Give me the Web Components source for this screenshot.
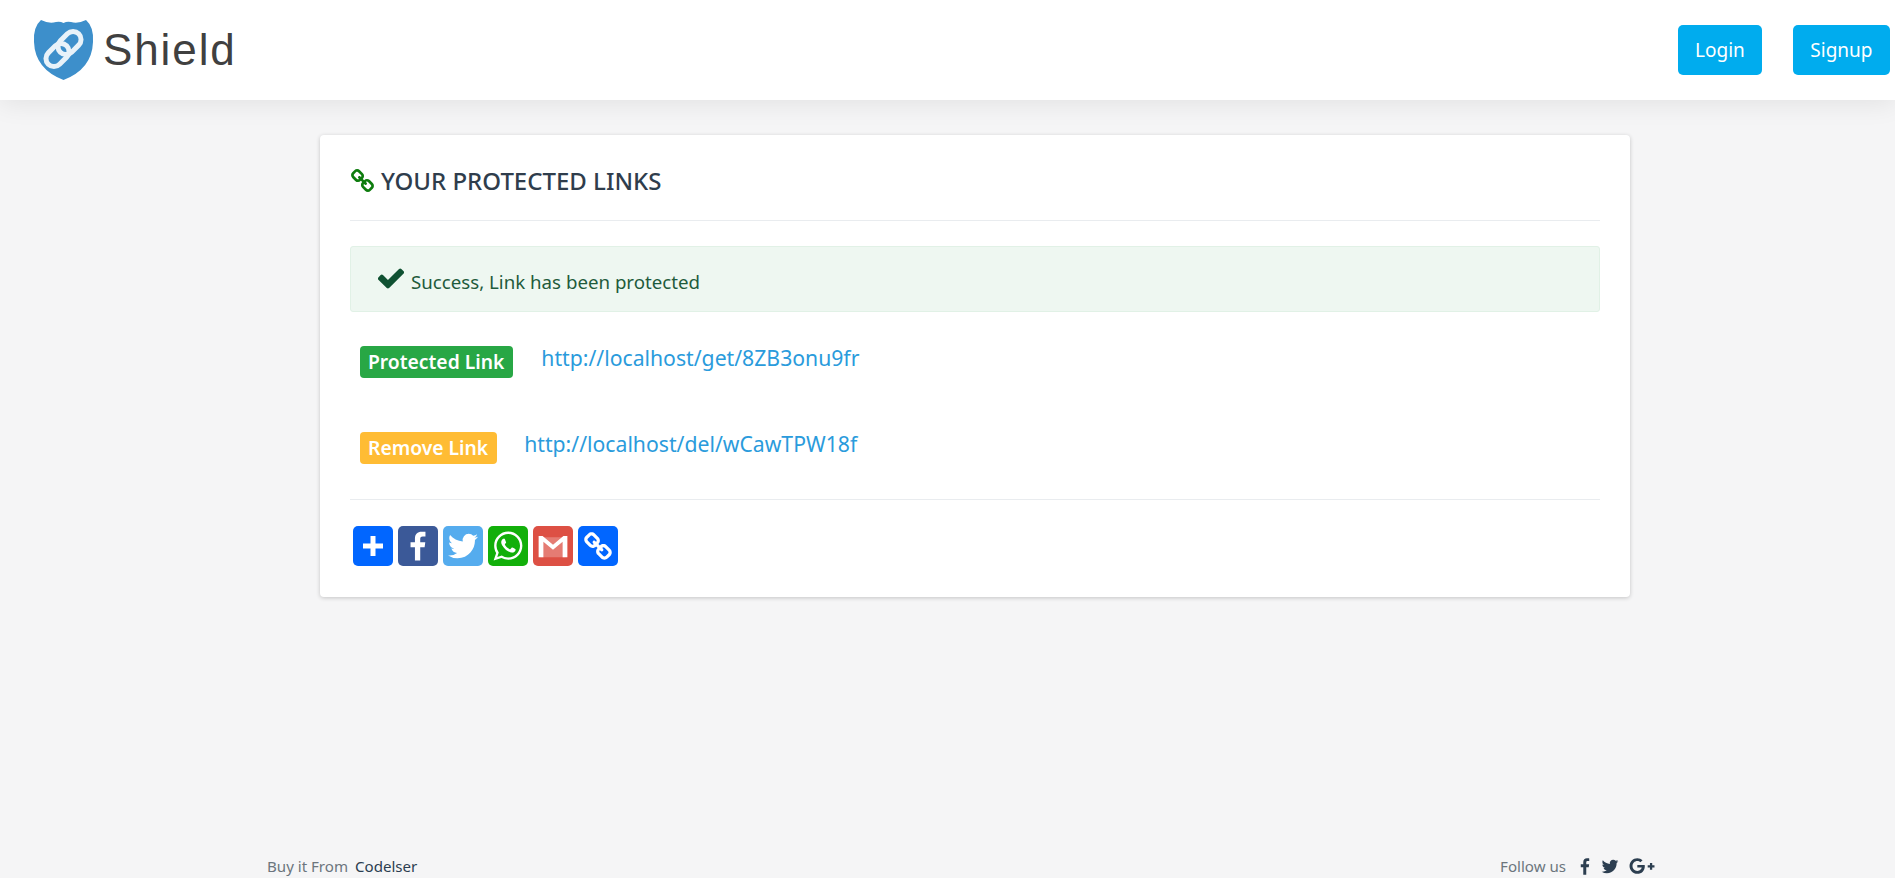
<!DOCTYPE html>
<html lang="en">
<head>
<meta charset="utf-8">
<title>Shield</title>
<style>
  html, body { margin: 0; height: 100%; }
  body {
    background: #f5f5f6;
    font-family: "Noto Sans", "Open Sans", sans-serif;
    color: #2c3e50;
    overflow: hidden;
  }
  #page { display: flex; flex-direction: column; height: 100vh; }
</style>
</head>
<body>
<div id="page">
  <shield-header></shield-header>
  <shield-main>
    <shield-card heading="YOUR PROTECTED LINKS">
      <success-alert>Success, Link has been protected</success-alert>
      <link-row kind="success" label="Protected Link" gap="28" href="http://localhost/get/8ZB3onu9fr"></link-row>
      <link-row kind="warning" label="Remove Link" gap="27" href="http://localhost/del/wCawTPW18f"></link-row>
      <share-bar slot="footer"></share-bar>
    </shield-card>
  </shield-main>
  <shield-footer></shield-footer>
</div>

<script>
/**
 * Icon paths, shared by the elements below.
 */
const LINK_PATH = 'M24.412 21.177c0-.36-.126-.665-.377-.917l-2.804-2.804a1.235 1.235 0 0 0-.913-.378c-.377 0-.7.144-.97.43.026.028.11.11.255.25.144.14.24.236.29.29s.117.14.2.256c.087.117.146.232.177.344.03.112.046.236.046.37 0 .36-.126.666-.377.918a1.25 1.25 0 0 1-.918.377 1.4 1.4 0 0 1-.373-.047 1.062 1.062 0 0 1-.345-.175 2.268 2.268 0 0 1-.256-.2 6.815 6.815 0 0 1-.29-.29c-.14-.142-.223-.23-.25-.254-.297.28-.445.607-.445.984 0 .36.126.664.377.916l2.778 2.79c.243.243.548.364.917.364.36 0 .665-.118.917-.35l1.982-1.97c.252-.25.378-.55.378-.9zm-9.477-9.504c0-.36-.126-.665-.377-.917l-2.777-2.79a1.235 1.235 0 0 0-.913-.378c-.35 0-.656.12-.917.364L7.967 9.92c-.252.252-.378.553-.378.903 0 .36.126.665.377.917l2.804 2.804c.243.243.548.364.917.364.377 0 .7-.14.97-.418-.026-.027-.11-.11-.255-.25s-.24-.235-.29-.29a2.675 2.675 0 0 1-.2-.255 1.052 1.052 0 0 1-.177-.344 1.396 1.396 0 0 1-.046-.37c0-.36.126-.662.377-.914.252-.252.557-.377.917-.377.136 0 .26.015.37.046.114.03.23.09.346.175.117.085.2.153.256.2.054.05.15.148.29.29.14.146.222.23.25.258.294-.278.442-.606.442-.983zM27 21.177c0 1.078-.382 1.99-1.146 2.736l-1.982 1.968c-.745.75-1.658 1.12-2.736 1.12-1.087 0-2.004-.38-2.75-1.143l-2.777-2.79c-.75-.747-1.12-1.66-1.12-2.737 0-1.106.392-2.046 1.183-2.818l-1.186-1.185c-.774.79-1.708 1.186-2.805 1.186-1.078 0-1.995-.376-2.75-1.13l-2.803-2.81C5.377 12.82 5 11.903 5 10.826c0-1.08.382-1.993 1.146-2.738L8.128 6.12C8.873 5.372 9.785 5 10.864 5c1.087 0 2.004.382 2.75 1.146l2.777 2.79c.75.747 1.12 1.66 1.12 2.737 0 1.105-.394 2.045-1.183 2.817l1.186 1.186c.774-.79 1.708-1.186 2.805-1.186 1.078 0 1.995.377 2.75 1.132l2.804 2.804c.754.755 1.13 1.672 1.13 2.75z'
const TWITTER_PATH = 'M28 8.557a9.913 9.913 0 0 1-2.828.775 4.93 4.93 0 0 0 2.166-2.725 9.738 9.738 0 0 1-3.13 1.194 4.92 4.92 0 0 0-3.593-1.55 4.924 4.924 0 0 0-4.794 6.049c-4.09-.21-7.72-2.17-10.15-5.15a4.942 4.942 0 0 0-.665 2.477c0 1.71.87 3.214 2.19 4.1a4.968 4.968 0 0 1-2.23-.616v.06c0 2.39 1.7 4.38 3.952 4.83-.414.115-.85.174-1.297.174-.318 0-.626-.03-.928-.086a4.935 4.935 0 0 0 4.6 3.42 9.893 9.893 0 0 1-6.114 2.107c-.398 0-.79-.023-1.175-.068a13.953 13.953 0 0 0 7.55 2.213c9.056 0 14.01-7.507 14.01-14.013 0-.213-.005-.426-.015-.637.96-.695 1.795-1.56 2.455-2.55z'
const FACEBOOK_PATH = 'M17.78 27.5V17.008h3.522l.527-4.09h-4.05v-2.61c0-1.182.33-1.99 2.023-1.99h2.166V4.66c-.375-.05-1.66-.16-3.155-.16-3.123 0-5.26 1.905-5.26 5.405v3.016h-3.53v4.09h3.53V27.5h4.223z'
const WHATSAPP_PATH = 'M16.21 4.41C9.973 4.41 4.917 9.465 4.917 15.7c0 2.134.592 4.13 1.62 5.832L4.5 27.59l6.25-2.002a11.241 11.241 0 0 0 5.46 1.404c6.234 0 11.29-5.055 11.29-11.29 0-6.237-5.056-11.292-11.29-11.292zm0 20.69c-1.91 0-3.69-.57-5.173-1.553l-3.61 1.156 1.173-3.49a9.345 9.345 0 0 1-1.79-5.512c0-5.18 4.217-9.4 9.4-9.4 5.183 0 9.397 4.22 9.397 9.4 0 5.188-4.214 9.4-9.398 9.4zm5.293-6.832c-.284-.155-1.673-.906-1.934-1.012-.265-.106-.455-.16-.658.12s-.78.91-.954 1.096c-.176.186-.345.203-.628.048-.282-.154-1.2-.494-2.264-1.517-.83-.795-1.373-1.76-1.53-2.055-.158-.295 0-.445.15-.584.134-.124.3-.326.45-.488.15-.163.203-.28.306-.47.104-.19.06-.36-.005-.506-.066-.147-.59-1.587-.81-2.173-.218-.586-.46-.498-.63-.505-.168-.007-.358-.038-.55-.045-.19-.007-.51.054-.78.332-.277.274-1.05.943-1.1 2.362-.055 1.418.926 2.826 1.064 3.023.137.2 1.874 3.272 4.76 4.537 2.888 1.264 2.9.878 3.43.85.53-.027 1.734-.633 2-1.297.266-.664.287-1.24.22-1.363-.07-.123-.26-.203-.54-.357z'

/**
 * The top bar with the logo and the account buttons.
 */
customElements.define('shield-header',
  class extends HTMLElement {
    constructor () {
      super()
      this.attachShadow({ mode: 'open' }).innerHTML = `
        <style>
          :host {
            display: flex;
            align-items: center;
            justify-content: space-between;
            height: 100px;
            flex: none;
            padding: 0 5px 0 33px;
            background: #fff;
            box-shadow: 0 4px 24px rgba(0, 0, 0, .08);
            position: relative;
          }
          .brand { display: flex; align-items: center; gap: 9px; }
          .brand span {
            font: 44px "Liberation Sans", Arial, sans-serif;
            letter-spacing: 1.900px;
            color: #404040;
          }
          nav { display: flex; gap: 31px; }
          a {
            display: block;
            height: 50px;
            line-height: 50px;
            padding: 0 17.500px;
            border-radius: 5px;
            background: #00acee;
            color: #fff;
            font-size: 19px;
            text-decoration: none;
          }
          a:first-child { padding: 0 17px; }
        </style>
        <div class="brand">
          <svg width="61" height="62" viewBox="0 0 61 60">
            <path fill="#3d8fcb" d="M8 0 Q16 4 23 2 Q27 1 30.500 3 Q34 1 38 2 Q45 4 53 0 Q61 7 60 22 Q59 49 30.500 60 Q2 49 1 22 Q0 7 8 0z"/>
            <g fill="none" stroke="#e8f2f9" stroke-width="5" transform="rotate(-45 30.500 29)">
              <rect x="9" y="21" width="26" height="16" rx="8"/>
              <rect x="26" y="21" width="26" height="16" rx="8"/>
            </g>
          </svg>
          <span>Shield</span>
        </div>
        <nav><a href="#">Login</a><a href="#">Signup</a></nav>
      `
    }
  })

/**
 * The centre column, takes up the room between header and footer.
 */
customElements.define('shield-main',
  class extends HTMLElement {
    constructor () {
      super()
      this.attachShadow({ mode: 'open' }).innerHTML = `
        <style>
          :host {
            display: block;
            flex: 1;
            padding-top: 35px;
          }
        </style>
        <slot></slot>
      `
    }
  })

/**
 * The white card, with a heading and a footer part split by rules.
 */
customElements.define('shield-card',
  class extends HTMLElement {
    constructor () {
      super()
      this.attachShadow({ mode: 'open' }).innerHTML = `
        <style>
          :host {
            display: block;
            box-sizing: border-box;
            width: 1310px;
            margin-left: 320px;
            padding: 0 30px 31px;
            background: #fff;
            border-radius: 4px;
            box-shadow: 0 1px 4px rgba(0, 0, 0, .2);
          }
          header {
            display: flex;
            align-items: center;
            gap: 6px;
            height: 85px;
            border-bottom: 1px solid #e9ecef;
          }
          h2 {
            margin: 5px 0 0;
            font-size: 24px;
            font-weight: 500;
            color: #2f3d4c;
          }
          svg { margin-top: 5px; }
          .body { padding-top: 25px; }
          .foot {
            margin-top: 15px;
            padding-top: 26px;
            border-top: 1px solid #e9ecef;
          }
        </style>
        <header>
          <svg width="25" height="25" viewBox="4 4 24 24"><path fill="#0e7c0e" d="${LINK_PATH}"/></svg>
          <h2></h2>
        </header>
        <div class="body"><slot></slot></div>
        <div class="foot"><slot name="footer"></slot></div>
      `
      this.shadowRoot.querySelector('h2').textContent = this.getAttribute('heading')
    }
  })

/**
 * The green notice above the links.
 */
customElements.define('success-alert',
  class extends HTMLElement {
    constructor () {
      super()
      this.attachShadow({ mode: 'open' }).innerHTML = `
        <style>
          :host {
            display: flex;
            align-items: center;
            gap: 7px;
            box-sizing: border-box;
            height: 66px;
            padding: 4px 27px 0 27px;
            background: #eef7f1;
            border: 1px solid #e1f1e6;
            border-radius: 3px;
            color: #1e5b3c;
            font-size: 18.700px;
          }
          svg { margin-top: -6px; }
        </style>
        <svg width="26" height="26" viewBox="128 128 1536 1536"><path fill="#0f5132" d="M1671 566q0 40-28 68l-724 724-136 136q-28 28-68 28t-68-28l-136-136-362-362q-28-28-28-68t28-68l136-136q28-28 68-28t68 28l294 295 656-657q28-28 68-28t68 28l136 136q28 28 28 68z"/></svg>
        <span><slot></slot></span>
      `
    }
  })

/**
 * A coloured badge followed by its link.
 */
customElements.define('link-row',
  class extends HTMLElement {
    constructor () {
      super()
      const colours = { success: '#28a745', warning: '#ffbc34' }
      const href = this.getAttribute('href')
      this.attachShadow({ mode: 'open' }).innerHTML = `
        <style>
          :host {
            display: flex;
            align-items: flex-start;
            height: 52px;
            padding: 34px 0 0 10px;
          }
          b {
            display: block;
            height: 32px;
            line-height: 32px;
            padding: 0 9px 0 8px;
            border-radius: 4px;
            background: ${colours[this.getAttribute('kind')]};
            color: #fff;
            font-size: 19.300px;
            font-weight: 600;
            margin-right: ${this.getAttribute('gap')}px;
          }
          a {
            margin-top: -1px;
            color: #2a9bdc;
            font-size: 21.200px;
            line-height: 26px;
            text-decoration: none;
          }
        </style>
        <b>${this.getAttribute('label')}</b>
        <a href="${href}">${href}</a>
      `
    }
  })

/**
 * The row of share buttons.
 */
customElements.define('share-bar',
  class extends HTMLElement {
    constructor () {
      super()
      const buttons = [
        ['#0166ff', '<path fill="#fff" d="M18 14V8h-4v6H8v4h6v6h4v-6h6v-4h-6z"/>', 'Add to any'],
        ['#3b5998', `<path fill="#fff" d="${FACEBOOK_PATH}"/>`, 'Facebook'],
        ['#55acee', `<path fill="#fff" d="${TWITTER_PATH}"/>`, 'Twitter'],
        ['#12af0a', `<path fill="#fff" d="${WHATSAPP_PATH}"/>`, 'WhatsApp'],
        ['#dd5044', '<path fill="#fff" fill-opacity=".25" d="M6 9h20v16H6z"/><path fill="#fff" d="M4.500 8h3.200L16 15l8.300-7h3.200v17h-3.800V12.500L16 19 8.300 12.500V25H4.500z"/>', 'Gmail'],
        ['#0166ff', `<path fill="#fff" d="${LINK_PATH}"/>`, 'Copy link']
      ]
      this.attachShadow({ mode: 'open' }).innerHTML = `
        <style>
          :host {
            display: flex;
            gap: 5px;
            padding-left: 3px;
          }
          a { display: block; width: 40px; height: 40px; border-radius: 5px; overflow: hidden; }
          svg { display: block; }
        </style>
        ${buttons.map(([colour, icon, name]) => `
          <a href="#" title="${name}" style="background:${colour}">
            <svg width="40" height="40" viewBox="0 0 32 32">${icon}</svg>
          </a>`).join('')}
      `
    }
  })

/**
 * The page footer, cut by the bottom of the window.
 */
customElements.define('shield-footer',
  class extends HTMLElement {
    constructor () {
      super()
      this.attachShadow({ mode: 'open' }).innerHTML = `
        <style>
          :host {
            display: flex;
            justify-content: space-between;
            align-items: center;
            flex: none;
            box-sizing: border-box;
            height: 24px;
            padding: 0 240px 0 267px;
            font-size: 15.100px;
            color: #6c757d;
          }
          a { color: #2c3e50; text-decoration: none; }
          .left a { margin-left: 3px; }
          .right { display: flex; align-items: center; gap: 10px; }
          .right span { margin-right: 3px; }
          svg { display: block; fill: #2c3e50; }
        </style>
        <div class="left">Buy it From <a href="#">Codelser</a></div>
        <div class="right">
          <span>Follow us</span>
          <svg width="12" height="17" viewBox="8 4 16 24"><path d="${FACEBOOK_PATH}"/></svg>
          <svg width="18" height="17" viewBox="3 4 26 24"><path d="${TWITTER_PATH}"/></svg>
          <svg width="26" height="18" viewBox="0 40 640 432"><path d="M386.061 228.496c1.834 9.692 3.143 19.384 3.143 31.956C389.204 370.205 315.599 448 204.8 448c-106.084 0-192-85.915-192-192s85.916-192 192-192c51.864 0 95.083 18.859 128.611 50.292l-52.126 50.03c-14.145-13.621-39.028-29.599-76.485-29.599-65.484 0-118.92 54.221-118.92 121.277 0 67.056 53.436 121.277 118.92 121.277 75.961 0 104.513-54.745 108.965-82.773H204.8v-66.009h181.261zm185.406 6.437V179.2h-56.001v55.733h-55.733v56.001h55.733v55.733h56.001v-55.733H627.2v-56.001h-55.733z"/></svg>
        </div>
      `
    }
  })
</script>
</body>
</html>
